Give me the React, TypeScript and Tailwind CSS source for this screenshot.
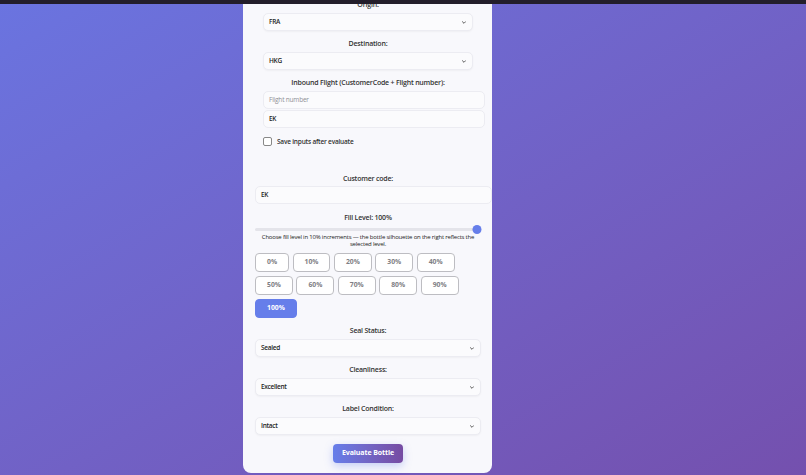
import { useState } from 'react';

const font = { fontFamily: '"Open Sans", "Noto Sans", Arial, sans-serif' };

function Label({ children }: { children: React.ReactNode }) {
  return (
    <div className="h-[10px] text-center text-[7px] leading-[10px] font-semibold tracking-[-0.2px] text-[#333]">
      {children}
    </div>
  );
}

function Select({ value, className = '' }: { value: string; className?: string }) {
  return (
    <div
      className={`mt-[3px] flex h-[18px] items-center justify-between rounded-[5px] border border-[#ececf2] bg-[#fbfbfd] pl-[5px] pr-[6px] shadow-[0_1px_2px_rgba(0,0,0,0.04)] ${className}`}
    >
      <span className="text-[6.5px] font-semibold tracking-[-0.3px] text-[#1e1e1e]">{value}</span>
      <svg width="4" height="3" viewBox="0 0 10 6" fill="none">
        <path d="M1 1l4 4 4-4" stroke="#333" strokeWidth="2" strokeLinecap="round" strokeLinejoin="round" />
      </svg>
    </div>
  );
}

function Input({ value, placeholder, className = '' }: { value?: string; placeholder?: string; className?: string }) {
  return (
    <div
      className={`flex h-[18px] items-center rounded-[5px] border border-[#ececf2] bg-[#fbfbfd] pl-[5px] ${className}`}
    >
      {value ? (
        <span className="text-[6.5px] font-semibold tracking-[-0.3px] text-[#1e1e1e]">{value}</span>
      ) : (
        <span className="text-[6.5px] tracking-[-0.2px] text-[#8f8f95]">{placeholder}</span>
      )}
    </div>
  );
}

const levels = [0, 10, 20, 30, 40, 50, 60, 70, 80, 90, 100];

export default function App() {
  const [fill, setFill] = useState(100);

  return (
    <div
      className="relative h-[475px] w-full overflow-hidden bg-gradient-to-br from-[#6a74e0] to-[#7450ae]"
      style={font}
    >
      <div className="absolute inset-x-0 top-0 z-10 h-[4px] bg-[#231e2b]" />

      <div className="pl-[243px]">
        <div className="h-[473px] w-[249px] rounded-b-[8px] bg-[#f8f8fc] pl-[12px] pr-[11px]">
          {/* saved flight section */}
          <div className="h-[160px] px-[8px]">
            <Label>Origin:</Label>
            <Select value="FRA" />
            <div className="mt-[8px]">
              <Label>Destination:</Label>
              <Select value="HKG" />
            </div>
            <div className="mt-[8px]">
              <Label>Inbound Flight (CustomerCode + Flight number):</Label>
              <div className="mt-[3px] w-[222px]">
                <Input placeholder="Flight number" />
                <Input value="EK" className="mt-[1px]" />
              </div>
            </div>
            <label className="mt-[9px] flex items-center gap-[5px]">
              <span className="h-[9px] w-[9px] rounded-[2px] border border-[#888] bg-white" />
              <span className="text-[6.5px] font-semibold tracking-[-0.2px] text-[#333]">Save inputs after evaluate</span>
            </label>
          </div>

          <div className="mt-[14px]">
            <Label>Customer code:</Label>
            <Input value="EK" className="mt-[2px] w-[237px]" />
          </div>

          <div className="mt-[9px]">
            <Label>Fill Level: {fill}%</Label>
            <div className="relative mt-[1px] h-[10px]">
              <div className="absolute left-0 right-0 top-[4px] h-[3px] rounded-full bg-[#e4e4ea]" />
              <div
                className="absolute top-[0.5px] h-[9px] w-[9px] -translate-x-1/2 rounded-full bg-[#667eea]"
                style={{ left: `calc(${fill}% * 0.96 + 5px)` }}
              />
            </div>
            <p className="px-[4px] text-center text-[6px] leading-[7px] tracking-[-0.2px] text-[#222]">
              Choose fill level in 10% increments — the bottle silhouette on the right reflects the selected level.
            </p>
          </div>

          <div className="mt-[5px] flex w-[210px] flex-wrap gap-x-[3.5px] gap-y-[4px]">
            {levels.map((l) => (
              <button
                key={l}
                onClick={() => setFill(l)}
                className={`h-[19px] rounded-[4px] px-[11px] text-[6.8px] font-bold ${
                  l === fill
                    ? 'border border-[#667eea] bg-[#667eea] text-white'
                    : 'border border-[#bdbdc2] bg-white text-[#7e7e84]'
                }`}
              >
                {l}%
              </button>
            ))}
          </div>

          <div className="mt-[8px]">
            <Label>Seal Status:</Label>
            <Select value="Sealed" />
          </div>
          <div className="mt-[8px]">
            <Label>Cleanliness:</Label>
            <Select value="Excellent" />
          </div>
          <div className="mt-[8px]">
            <Label>Label Condition:</Label>
            <Select value="Intact" />
          </div>

          <div className="mt-[9px] flex justify-center">
            <button className="h-[19px] w-[70px] rounded-[4px] bg-gradient-to-r from-[#667eea] to-[#764ba2] text-[7px] font-bold tracking-[-0.1px] text-white shadow-[0_3px_8px_rgba(102,126,234,0.35)]">
              Evaluate Bottle
            </button>
          </div>
        </div>
      </div>
    </div>
  );
}
